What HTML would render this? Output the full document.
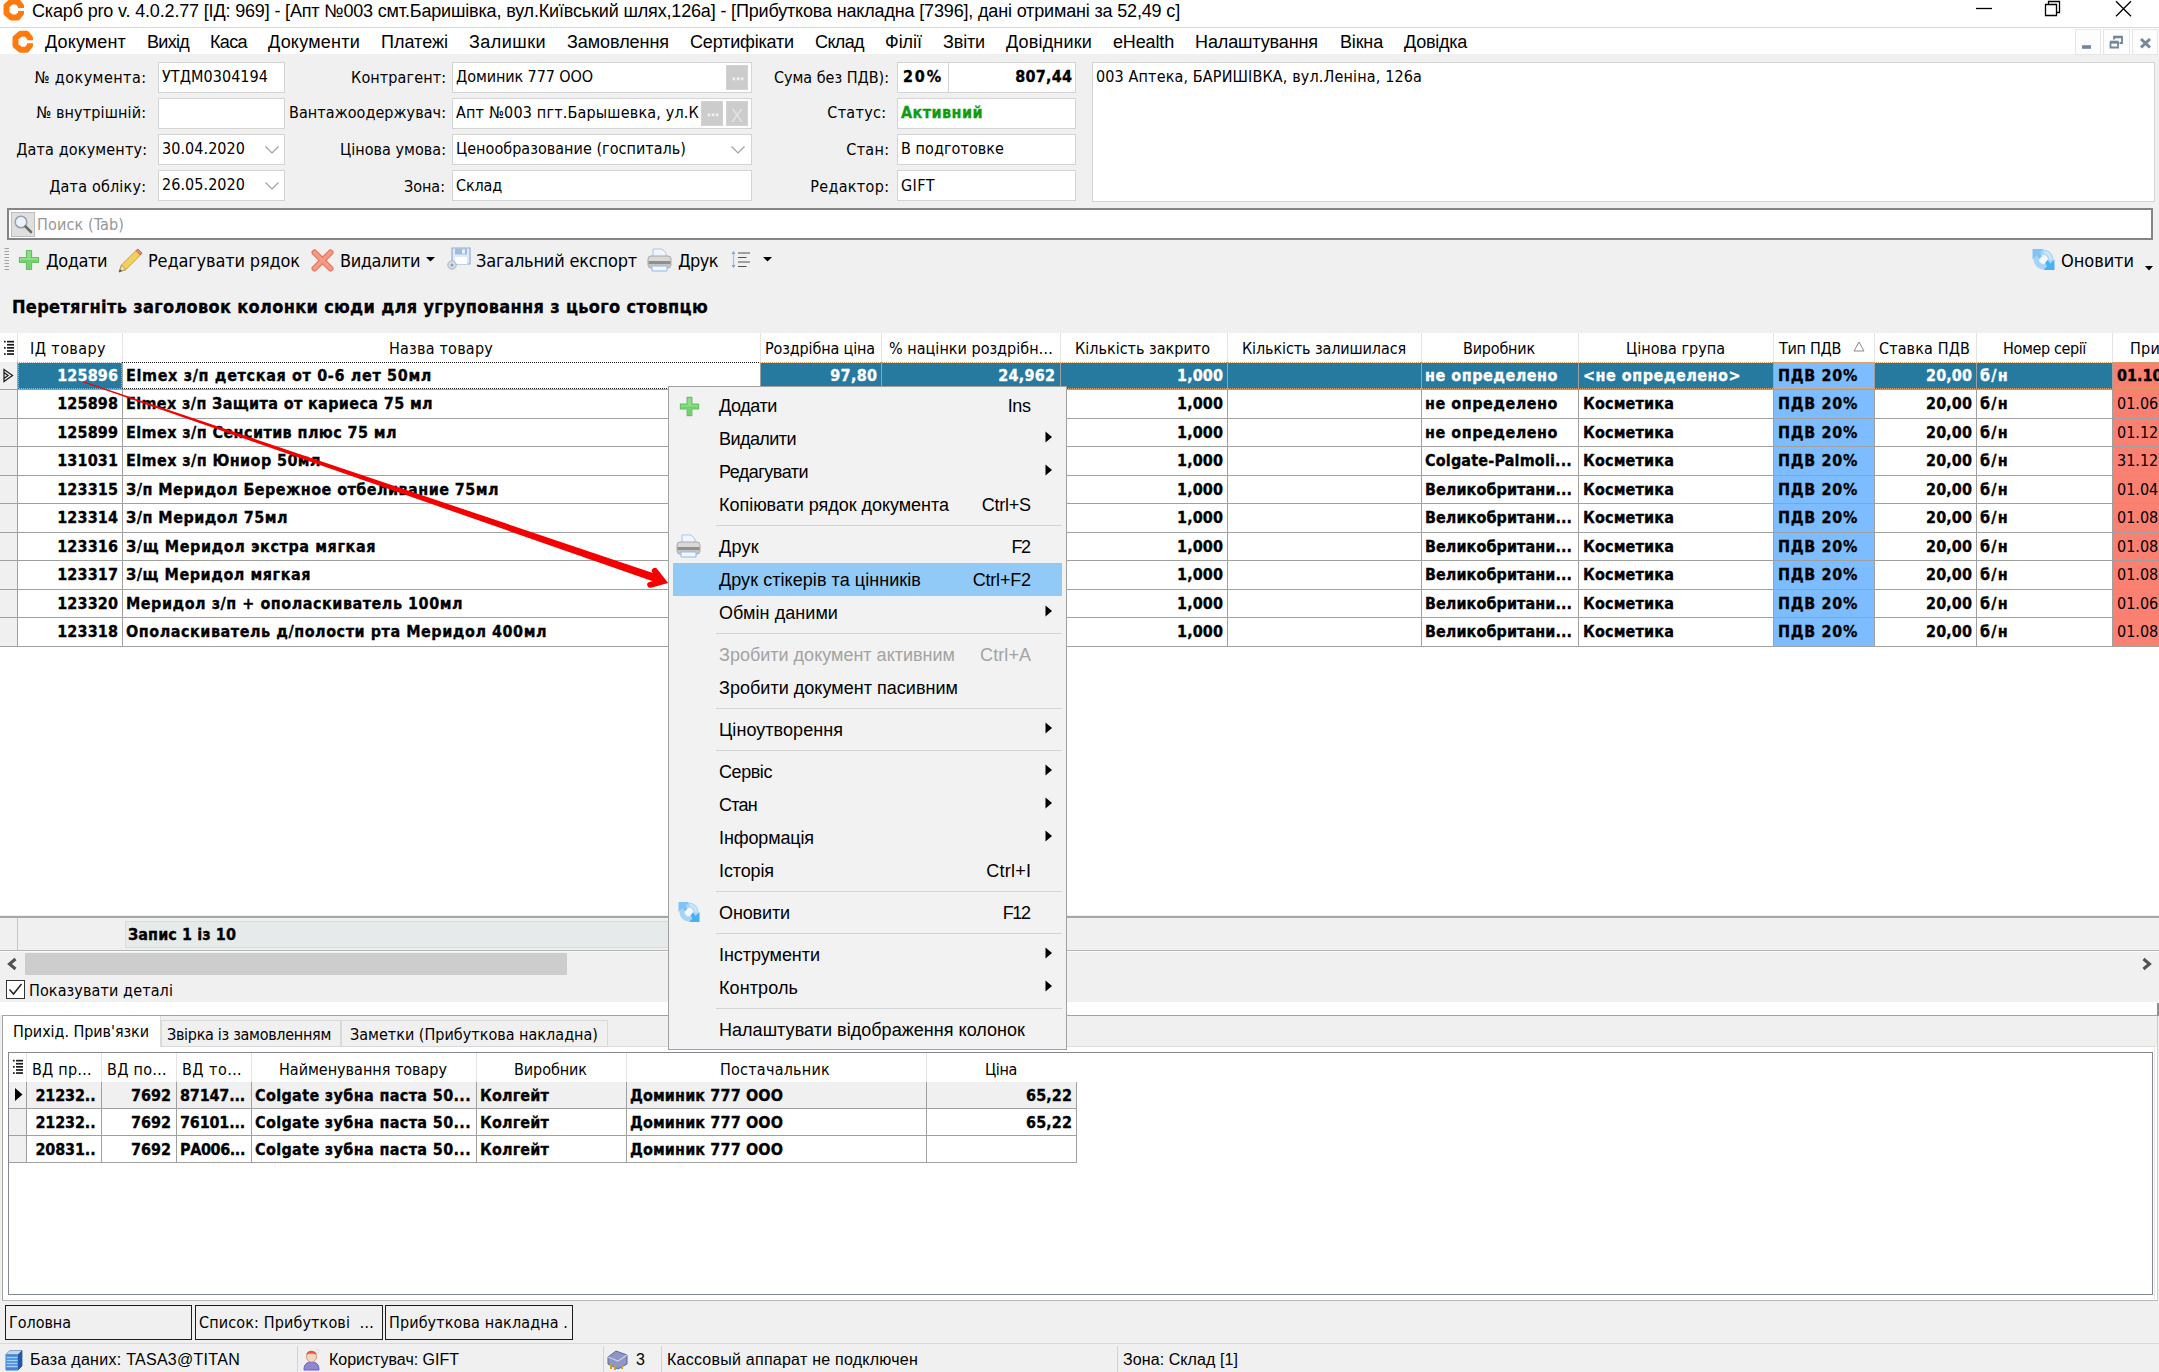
<!DOCTYPE html>
<html lang="uk"><head><meta charset="utf-8"><title>Скарб pro</title>
<style>
html,body{margin:0;padding:0;}
body{width:2159px;height:1372px;position:relative;overflow:hidden;background:#f0f0f0;font-family:"Liberation Sans",sans-serif;}
.b{position:absolute;box-sizing:border-box;}
.t{position:absolute;white-space:pre;line-height:1;color:#000;}
svg{position:absolute;overflow:visible;}
</style></head>
<body>
<div class="b" style="left:0px;top:0px;width:2159px;height:27px;background:#fff;"></div>
<div class="b" style="left:0px;top:27px;width:2159px;height:1px;background:#d9d9d9;"></div>
<svg style="left:3px;top:-2px" width="21" height="23" viewBox="0 0 21 23"><path d="M18 10V7.800L14.500 3.500H8.500L3.500 7.800V15.200L8.500 19.500H14.500L18 15.200V13" fill="none" stroke="#ff7a0d" stroke-width="6" stroke-linejoin="round"/></svg>
<span class="t" style="top:2px;font-size:18px;font-family:'Liberation Sans', sans-serif;letter-spacing:-0.162px;left:32.00px;">Скарб pro v. 4.0.2.77 [ІД: 969] - [Апт №003 смт.Баришівка, вул.Київський шлях,126а] - [Прибуткова накладна [7396], дані отримані за 52,49 с]</span>
<svg style="left:1970px;top:-1px" width="180" height="24" viewBox="0 0 180 24"><g fill="none" stroke="#000" stroke-width="1.3"><path d="M6 9.5H22"/><path d="M75.5 5.5h11v11h-11z M78.5 5.5v-3h11v11h-3"/><path d="M146 2.200l15 15M161 2.200l-15 15"/></g></svg>
<div class="b" style="left:0px;top:28px;width:2159px;height:26px;background:#fff;"></div>
<svg style="left:12px;top:29.5px" width="21" height="23.5" viewBox="0 0 21 23"><path d="M18 10V7.800L14.500 3.500H8.500L3.500 7.800V15.200L8.500 19.500H14.500L18 15.200V13" fill="none" stroke="#ff7a0d" stroke-width="6" stroke-linejoin="round"/></svg>
<span class="t" style="top:33px;font-size:18px;font-family:'Liberation Sans', sans-serif;letter-spacing:0.143px;left:45.00px;">Документ</span>
<span class="t" style="top:33px;font-size:18px;font-family:'Liberation Sans', sans-serif;letter-spacing:-0.713px;left:147.00px;">Вихід</span>
<span class="t" style="top:33px;font-size:18px;font-family:'Liberation Sans', sans-serif;letter-spacing:-0.629px;left:210.00px;">Каса</span>
<span class="t" style="top:33px;font-size:18px;font-family:'Liberation Sans', sans-serif;letter-spacing:0.233px;left:268.00px;">Документи</span>
<span class="t" style="top:33px;font-size:18px;font-family:'Liberation Sans', sans-serif;letter-spacing:0.007px;left:381.00px;">Платежі</span>
<span class="t" style="top:33px;font-size:18px;font-family:'Liberation Sans', sans-serif;letter-spacing:0.455px;left:469.00px;">Залишки</span>
<span class="t" style="top:33px;font-size:18px;font-family:'Liberation Sans', sans-serif;letter-spacing:-0.056px;left:567.00px;">Замовлення</span>
<span class="t" style="top:33px;font-size:18px;font-family:'Liberation Sans', sans-serif;letter-spacing:-0.175px;left:690.00px;">Сертифікати</span>
<span class="t" style="top:33px;font-size:18px;font-family:'Liberation Sans', sans-serif;letter-spacing:-0.619px;left:815.00px;">Склад</span>
<span class="t" style="top:33px;font-size:18px;font-family:'Liberation Sans', sans-serif;letter-spacing:-0.037px;left:885.00px;">Філії</span>
<span class="t" style="top:33px;font-size:18px;font-family:'Liberation Sans', sans-serif;letter-spacing:-0.147px;left:943.00px;">Звіти</span>
<span class="t" style="top:33px;font-size:18px;font-family:'Liberation Sans', sans-serif;letter-spacing:0.177px;left:1006.00px;">Довідники</span>
<span class="t" style="top:33px;font-size:18px;font-family:'Liberation Sans', sans-serif;letter-spacing:-0.150px;left:1113.00px;">eHealth</span>
<span class="t" style="top:33px;font-size:18px;font-family:'Liberation Sans', sans-serif;letter-spacing:-0.118px;left:1195.00px;">Налаштування</span>
<span class="t" style="top:33px;font-size:18px;font-family:'Liberation Sans', sans-serif;letter-spacing:-0.169px;left:1340.00px;">Вікна</span>
<span class="t" style="top:33px;font-size:18px;font-family:'Liberation Sans', sans-serif;letter-spacing:-0.250px;left:1404.00px;">Довідка</span>
<div class="b" style="left:2075px;top:29px;width:26px;height:26px;background:#fdfdfd;border:1px solid #e6e6e6;"></div>
<div class="b" style="left:2103px;top:29px;width:27px;height:26px;background:#fdfdfd;border:1px solid #e6e6e6;"></div>
<div class="b" style="left:2132px;top:29px;width:26px;height:26px;background:#fdfdfd;border:1px solid #e6e6e6;"></div>
<svg style="left:2075px;top:29px" width="84" height="26" viewBox="0 0 84 26"><g fill="none" stroke="#74869b"><path d="M7 18h9" stroke-width="3.600"/><path d="M35.500 13.500h7.500v5h-7.500z" stroke-width="1.800"/><path d="M35 13h8.500" stroke-width="2.600"/><path d="M39 10.500v-2.500h8v6h-2.500" stroke-width="1.800"/><path d="M38.500 8h9" stroke-width="2.600"/><path d="M66 10l9 8.500M75 10l-9 8.500" stroke-width="3"/></g></svg>
<div class="b" style="left:158px;top:62px;width:127px;height:31px;background:#fff;border:1px solid #d4d4d4;"></div>
<div class="b" style="left:452px;top:62px;width:300px;height:31px;background:#fff;border:1px solid #d4d4d4;"></div>
<div class="b" style="left:897px;top:62px;width:179px;height:31px;background:#fff;border:1px solid #d4d4d4;"></div>
<div class="b" style="left:158px;top:98px;width:127px;height:31px;background:#fff;border:1px solid #d4d4d4;"></div>
<div class="b" style="left:452px;top:98px;width:300px;height:31px;background:#fff;border:1px solid #d4d4d4;"></div>
<div class="b" style="left:897px;top:98px;width:179px;height:31px;background:#fff;border:1px solid #d4d4d4;"></div>
<div class="b" style="left:158px;top:134px;width:127px;height:31px;background:#fff;border:1px solid #d4d4d4;"></div>
<div class="b" style="left:452px;top:134px;width:300px;height:31px;background:#fff;border:1px solid #d4d4d4;"></div>
<div class="b" style="left:897px;top:134px;width:179px;height:31px;background:#fff;border:1px solid #d4d4d4;"></div>
<div class="b" style="left:158px;top:170px;width:127px;height:31px;background:#fff;border:1px solid #d4d4d4;"></div>
<div class="b" style="left:452px;top:170px;width:300px;height:31px;background:#fff;border:1px solid #d4d4d4;"></div>
<div class="b" style="left:897px;top:170px;width:179px;height:31px;background:#fff;border:1px solid #d4d4d4;"></div>
<div class="b" style="left:1092px;top:62px;width:1063px;height:140px;background:#fff;border:1px solid #d4d4d4;"></div>
<div class="b" style="left:948px;top:63px;width:1px;height:29px;background:#d4d4d4;"></div>
<span class="t" style="top:70px;font-size:16px;font-family:'DejaVu Sans Condensed', 'DejaVu Sans', 'Liberation Sans', sans-serif;font-stretch:condensed;letter-spacing:0.441px;left:34.44px;">№ документа:</span>
<span class="t" style="top:105px;font-size:16px;font-family:'DejaVu Sans Condensed', 'DejaVu Sans', 'Liberation Sans', sans-serif;font-stretch:condensed;letter-spacing:0.132px;left:36.13px;">№ внутрішній:</span>
<span class="t" style="top:142px;font-size:16px;font-family:'DejaVu Sans Condensed', 'DejaVu Sans', 'Liberation Sans', sans-serif;font-stretch:condensed;letter-spacing:0.153px;left:16.15px;">Дата документу:</span>
<span class="t" style="top:179px;font-size:16px;font-family:'DejaVu Sans Condensed', 'DejaVu Sans', 'Liberation Sans', sans-serif;font-stretch:condensed;letter-spacing:0.184px;left:49.18px;">Дата обліку:</span>
<span class="t" style="top:70px;font-size:16px;font-family:'DejaVu Sans Condensed', 'DejaVu Sans', 'Liberation Sans', sans-serif;font-stretch:condensed;letter-spacing:0.104px;left:351.10px;">Контрагент:</span>
<span class="t" style="top:105px;font-size:16px;font-family:'DejaVu Sans Condensed', 'DejaVu Sans', 'Liberation Sans', sans-serif;font-stretch:condensed;letter-spacing:0.059px;left:289.06px;">Вантажоодержувач:</span>
<span class="t" style="top:142px;font-size:16px;font-family:'DejaVu Sans Condensed', 'DejaVu Sans', 'Liberation Sans', sans-serif;font-stretch:condensed;letter-spacing:0.030px;left:340.03px;">Цінова умова:</span>
<span class="t" style="top:179px;font-size:16px;font-family:'DejaVu Sans Condensed', 'DejaVu Sans', 'Liberation Sans', sans-serif;font-stretch:condensed;letter-spacing:-0.025px;left:403.98px;">Зона:</span>
<span class="t" style="top:70px;font-size:16px;font-family:'DejaVu Sans Condensed', 'DejaVu Sans', 'Liberation Sans', sans-serif;font-stretch:condensed;letter-spacing:-0.015px;left:773.99px;">Сума без ПДВ):</span>
<span class="t" style="top:105px;font-size:16px;font-family:'DejaVu Sans Condensed', 'DejaVu Sans', 'Liberation Sans', sans-serif;font-stretch:condensed;letter-spacing:0.297px;left:827.30px;">Статус:</span>
<span class="t" style="top:142px;font-size:16px;font-family:'DejaVu Sans Condensed', 'DejaVu Sans', 'Liberation Sans', sans-serif;font-stretch:condensed;letter-spacing:0.294px;left:846.29px;">Стан:</span>
<span class="t" style="top:179px;font-size:16px;font-family:'DejaVu Sans Condensed', 'DejaVu Sans', 'Liberation Sans', sans-serif;font-stretch:condensed;letter-spacing:0.312px;left:810.31px;">Редактор:</span>
<span class="t" style="top:69px;font-size:16px;font-family:'DejaVu Sans Condensed', 'DejaVu Sans', 'Liberation Sans', sans-serif;font-stretch:condensed;letter-spacing:0.061px;left:162.00px;">УТДМ0304194</span>
<span class="t" style="top:141px;font-size:16px;font-family:'DejaVu Sans Condensed', 'DejaVu Sans', 'Liberation Sans', sans-serif;font-stretch:condensed;letter-spacing:0.061px;left:162.00px;">30.04.2020</span>
<span class="t" style="top:177px;font-size:16px;font-family:'DejaVu Sans Condensed', 'DejaVu Sans', 'Liberation Sans', sans-serif;font-stretch:condensed;letter-spacing:0.061px;left:162.00px;">26.05.2020</span>
<span class="t" style="top:69px;font-size:16px;font-family:'DejaVu Sans Condensed', 'DejaVu Sans', 'Liberation Sans', sans-serif;font-stretch:condensed;letter-spacing:-0.089px;left:456.00px;">Доминик 777 ООО</span>
<span class="t" style="top:105px;font-size:16px;font-family:'DejaVu Sans Condensed', 'DejaVu Sans', 'Liberation Sans', sans-serif;font-stretch:condensed;letter-spacing:0.177px;left:456.00px;">Апт №003 пгт.Барышевка, ул.К</span>
<span class="t" style="top:141px;font-size:16px;font-family:'DejaVu Sans Condensed', 'DejaVu Sans', 'Liberation Sans', sans-serif;font-stretch:condensed;letter-spacing:0.036px;left:456.00px;">Ценообразование (госпиталь)</span>
<span class="t" style="top:178px;font-size:16px;font-family:'DejaVu Sans Condensed', 'DejaVu Sans', 'Liberation Sans', sans-serif;font-stretch:condensed;letter-spacing:-0.147px;left:456.00px;">Склад</span>
<span class="t" style="top:69px;font-size:16px;font-family:'DejaVu Sans Condensed', 'DejaVu Sans', 'Liberation Sans', sans-serif;font-stretch:condensed;font-weight:bold;-webkit-text-stroke:0.3px;letter-spacing:1.849px;left:903.00px;">20%</span>
<span class="t" style="top:69px;font-size:16px;font-family:'DejaVu Sans Condensed', 'DejaVu Sans', 'Liberation Sans', sans-serif;font-stretch:condensed;font-weight:bold;-webkit-text-stroke:0.3px;letter-spacing:0.242px;left:1015.24px;">807,44</span>
<span class="t" style="top:105px;font-size:16px;font-family:'DejaVu Sans Condensed', 'DejaVu Sans', 'Liberation Sans', sans-serif;font-stretch:condensed;font-weight:bold;-webkit-text-stroke:0.3px;color:#0f9b0f;letter-spacing:0.428px;left:901.00px;">Активний</span>
<span class="t" style="top:141px;font-size:16px;font-family:'DejaVu Sans Condensed', 'DejaVu Sans', 'Liberation Sans', sans-serif;font-stretch:condensed;letter-spacing:0.065px;left:901.00px;">В подготовке</span>
<span class="t" style="top:178px;font-size:16px;font-family:'DejaVu Sans Condensed', 'DejaVu Sans', 'Liberation Sans', sans-serif;font-stretch:condensed;letter-spacing:0.453px;left:901.00px;">GIFT</span>
<span class="t" style="top:69px;font-size:16px;font-family:'DejaVu Sans Condensed', 'DejaVu Sans', 'Liberation Sans', sans-serif;font-stretch:condensed;letter-spacing:0.138px;left:1096.00px;">003 Аптека, БАРИШІВКА, вул.Леніна, 126а</span>
<div class="b" style="left:726px;top:65px;width:22px;height:25px;background:#cccccc;border:1px solid #d2d2d2;"></div>
<div class="b" style="left:701px;top:101px;width:22px;height:25px;background:#cccccc;border:1px solid #d2d2d2;"></div>
<div class="b" style="left:726px;top:101px;width:22px;height:25px;background:#cccccc;border:1px solid #d2d2d2;"></div>
<span class="t" style="top:70px;font-size:12px;font-family:'DejaVu Sans Condensed', 'DejaVu Sans', 'Liberation Sans', sans-serif;font-stretch:condensed;font-weight:bold;-webkit-text-stroke:0.3px;color:#f2f2f2;left:731.84px;">...</span>
<span class="t" style="top:106px;font-size:12px;font-family:'DejaVu Sans Condensed', 'DejaVu Sans', 'Liberation Sans', sans-serif;font-stretch:condensed;font-weight:bold;-webkit-text-stroke:0.3px;color:#f2f2f2;left:706.84px;">...</span>
<span class="t" style="top:107px;font-size:18px;font-family:'Liberation Sans', sans-serif;color:#e2e2e2;left:730.99px;">X</span>
<svg style="left:265px;top:146px" width="14" height="8" viewBox="0 0 14 8"><path d="M0.5 0.5l6.5 6.500l6.500-6.500" fill="none" stroke="#a0a0a0" stroke-width="1.200"/></svg>
<svg style="left:265px;top:182px" width="14" height="8" viewBox="0 0 14 8"><path d="M0.5 0.5l6.5 6.500l6.500-6.500" fill="none" stroke="#a0a0a0" stroke-width="1.200"/></svg>
<svg style="left:731px;top:146px" width="14" height="8" viewBox="0 0 14 8"><path d="M0.5 0.5l6.5 6.500l6.500-6.500" fill="none" stroke="#a0a0a0" stroke-width="1.200"/></svg>
<div class="b" style="left:7px;top:208px;width:2146px;height:32px;background:#fff;border:2px solid #858585;"></div>
<div class="b" style="left:11px;top:212px;width:24px;height:25px;background:#dfdfdf;border:1px solid #bdbdbd;"></div>
<svg style="left:13px;top:214px" width="22" height="22" viewBox="0 0 22 22"><circle cx="8" cy="8" r="5.800" fill="#e9f1fc" stroke="#9aa0a8" stroke-width="1.500"/><path d="M12.500 12.500l5.500 5.500" stroke="#6a6a6a" stroke-width="2.600" stroke-linecap="round"/></svg>
<span class="t" style="top:217px;font-size:16px;font-family:'DejaVu Sans Condensed', 'DejaVu Sans', 'Liberation Sans', sans-serif;font-stretch:condensed;color:#979797;letter-spacing:0.136px;left:37.00px;">Поиск (Tab)</span>
<svg style="left:4px;top:248px" width="6" height="24" viewBox="0 0 6 24"><g fill="#a2a2a2"><rect x="0.500" y="0" width="4.500" height="1"/><rect x="0.500" y="3" width="4.500" height="1"/><rect x="0.500" y="6" width="4.500" height="1"/><rect x="0.500" y="9" width="4.500" height="1"/><rect x="0.500" y="12" width="4.500" height="1"/><rect x="0.500" y="15" width="4.500" height="1"/><rect x="0.500" y="18" width="4.500" height="1"/><rect x="0.500" y="21" width="4.500" height="1"/></g></svg>
<svg style="left:18px;top:249px" width="22" height="22" viewBox="0 0 22 22"><path d="M8.500 1.500h5v7h7v5h-7v7h-5v-7h-7v-5h7z" fill="#8fdc8a" stroke="#62c25d" stroke-width="1.200" stroke-linejoin="round"/><path d="M9.500 13.500h3v6.500h-3zM2.500 11h17v2.200h-17z" fill="#74cf6f"/></svg>
<span class="t" style="top:252px;font-size:18px;font-family:'DejaVu Sans Condensed', 'DejaVu Sans', 'Liberation Sans', sans-serif;font-stretch:condensed;letter-spacing:-0.440px;left:46.00px;">Додати</span>
<svg style="left:117px;top:248px" width="27" height="26" viewBox="0 0 27 26"><path d="M2 24l2.500-7L19 2.500l4.500 4.500L9 21.500z" fill="#f3cf5b" stroke="#c9a23a" stroke-width="1"/><path d="M19 2.500l2-1.500 4 4-1.500 2z" fill="#e58a7a" stroke="#c0604f" stroke-width=".8"/><path d="M2 24l2.500-7 4.500 4.500z" fill="#f0d9b5" stroke="#b58a4a" stroke-width=".8"/><path d="M2 24l1-2.800 1.800 1.800z" fill="#444"/></svg>
<span class="t" style="top:252px;font-size:18px;font-family:'DejaVu Sans Condensed', 'DejaVu Sans', 'Liberation Sans', sans-serif;font-stretch:condensed;letter-spacing:-0.150px;left:148.00px;">Редагувати рядок</span>
<svg style="left:311px;top:249px" width="23" height="23" viewBox="0 0 23 23"><path d="M3.500 3.500l16 16M19.500 3.500l-16 16" fill="none" stroke="#e8735a" stroke-width="6" stroke-linecap="round"/><path d="M3.500 3.500l16 16M19.500 3.500l-16 16" fill="none" stroke="#f59a86" stroke-width="3.600" stroke-linecap="round"/></svg>
<span class="t" style="top:252px;font-size:18px;font-family:'DejaVu Sans Condensed', 'DejaVu Sans', 'Liberation Sans', sans-serif;font-stretch:condensed;letter-spacing:-0.447px;left:340.00px;">Видалити</span>
<svg style="left:425.500px;top:257px" width="9" height="5" viewBox="0 0 9 5"><path d="M0 0h9l-4.500 4.500z" fill="#000"/></svg>
<svg style="left:446px;top:247px" width="26" height="28" viewBox="0 0 26 28"><path d="M6 1h18v16H6z" fill="#dfeaf6" stroke="#8fb0d6" stroke-width="1.200"/><rect x="9" y="1.500" width="12" height="6" fill="#9dbde0"/><rect x="16" y="2.500" width="3" height="4" fill="#eef4fb"/><rect x="9" y="10" width="12" height="7" fill="#fff"/><circle cx="6" cy="18" r="4.200" fill="#d8dde4" stroke="#a9b4c2" stroke-width="1"/><circle cx="6" cy="18" r="1.500" fill="#8da0b8"/></svg>
<span class="t" style="top:252px;font-size:18px;font-family:'DejaVu Sans Condensed', 'DejaVu Sans', 'Liberation Sans', sans-serif;font-stretch:condensed;letter-spacing:-0.193px;left:476.00px;">Загальний експорт</span>
<svg style="left:647px;top:248px" width="25" height="25" viewBox="0 0 25 25"><path d="M6 1h9l4 4v6H6z" fill="#f0f6fd" stroke="#a9c6ea" stroke-width="1"/><rect x="1" y="8" width="23" height="12" rx="3" fill="#d9d9d9" stroke="#a8a8a8" stroke-width="1"/><rect x="1.500" y="13" width="22" height="4" fill="#8f8f8f"/><rect x="1.500" y="16" width="22" height="3" fill="#c4c4c4"/><path d="M5 18h15v5H5z" fill="#f4f9ff" stroke="#8fb8ee" stroke-width="1"/></svg>
<span class="t" style="top:252px;font-size:18px;font-family:'DejaVu Sans Condensed', 'DejaVu Sans', 'Liberation Sans', sans-serif;font-stretch:condensed;letter-spacing:-0.578px;left:678.00px;">Друк</span>
<svg style="left:731px;top:250px" width="20" height="20" viewBox="0 0 20 20"><path d="M2.500 1.500v16" stroke="#9cc2ee" stroke-width="1.200"/><path d="M0.500 4l2-3 2 3zM0.500 15l2 3 2-3z" fill="#6ea8e8"/><g stroke="#505050" stroke-width="1.200"><path d="M7 3h12M7 7.500h8.500M7 12h12M7 16.500h8.500"/></g></svg>
<svg style="left:763px;top:257px" width="9" height="5" viewBox="0 0 9 5"><path d="M0 0h9l-4.500 4.500z" fill="#000"/></svg>
<svg style="left:2032px;top:248px" width="23" height="23" viewBox="0 0 22 22"><circle cx="11" cy="11" r="7" fill="none" stroke="#a6d3f6" stroke-width="5"/><path d="M11 1.500A9.500 9.500 0 0 1 20.500 11" fill="none" stroke="#8ec9f7" stroke-width="0"/><path d="M11.500 4A7 7 0 0 1 18 11.500" fill="none" stroke="#c9e5fa" stroke-width="3"/><path d="M0.500 1h10.500L7.500 4.500 10 8.500 7 10.500 4.500 7 0.500 11z" fill="#7fc4f8"/><path d="M21.500 21H11l3.500-3.500L12 13.500l3-2 2.500 3.500 4-4z" fill="#45b1f6"/><circle cx="11" cy="11" r="3.200" fill="#f4f9fd"/></svg>
<span class="t" style="top:252px;font-size:18px;font-family:'DejaVu Sans Condensed', 'DejaVu Sans', 'Liberation Sans', sans-serif;font-stretch:condensed;letter-spacing:-0.038px;left:2061.00px;">Оновити</span>
<svg style="left:2145px;top:265.500px" width="8" height="5" viewBox="0 0 8 5"><path d="M0 0h8l-4 4.500z" fill="#000"/></svg>
<span class="t" style="top:298px;font-size:18px;font-family:'DejaVu Sans Condensed', 'DejaVu Sans', 'Liberation Sans', sans-serif;font-stretch:condensed;font-weight:bold;-webkit-text-stroke:0.3px;letter-spacing:0.319px;left:12.00px;">Перетягніть заголовок колонки сюди для угруповання з цього стовпцю</span>
<div class="b" style="left:0px;top:333px;width:2159px;height:582px;background:#fff;"></div>
<div class="b" style="left:0px;top:362px;width:17px;height:284px;background:#f0f0f0;"></div>
<div class="b" style="left:1774px;top:362px;width:100px;height:284px;background:#7cbcff;"></div>
<div class="b" style="left:2113px;top:362px;width:60px;height:284px;background:#fa8072;"></div>
<div class="b" style="left:18px;top:363px;width:104px;height:26px;background:#267a9f;"></div>
<div class="b" style="left:761px;top:363px;width:120px;height:26px;background:#267a9f;"></div>
<div class="b" style="left:882px;top:363px;width:178px;height:26px;background:#267a9f;"></div>
<div class="b" style="left:1061px;top:363px;width:166px;height:26px;background:#267a9f;"></div>
<div class="b" style="left:1228px;top:363px;width:193px;height:26px;background:#267a9f;"></div>
<div class="b" style="left:1422px;top:363px;width:156px;height:26px;background:#267a9f;"></div>
<div class="b" style="left:1579px;top:363px;width:194px;height:26px;background:#267a9f;"></div>
<div class="b" style="left:1875px;top:363px;width:101px;height:26px;background:#267a9f;"></div>
<div class="b" style="left:1977px;top:363px;width:135px;height:26px;background:#267a9f;"></div>
<div class="b" style="left:18px;top:363px;width:104px;height:26px;background:#267a9f;"></div>
<div class="b" style="left:17px;top:333px;width:1px;height:29px;background:#e4e4e4;"></div>
<div class="b" style="left:122px;top:333px;width:1px;height:29px;background:#e4e4e4;"></div>
<div class="b" style="left:760px;top:333px;width:1px;height:29px;background:#e4e4e4;"></div>
<div class="b" style="left:881px;top:333px;width:1px;height:29px;background:#e4e4e4;"></div>
<div class="b" style="left:1060px;top:333px;width:1px;height:29px;background:#e4e4e4;"></div>
<div class="b" style="left:1227px;top:333px;width:1px;height:29px;background:#e4e4e4;"></div>
<div class="b" style="left:1421px;top:333px;width:1px;height:29px;background:#e4e4e4;"></div>
<div class="b" style="left:1578px;top:333px;width:1px;height:29px;background:#e4e4e4;"></div>
<div class="b" style="left:1773px;top:333px;width:1px;height:29px;background:#e4e4e4;"></div>
<div class="b" style="left:1874px;top:333px;width:1px;height:29px;background:#e4e4e4;"></div>
<div class="b" style="left:1976px;top:333px;width:1px;height:29px;background:#e4e4e4;"></div>
<div class="b" style="left:2112px;top:333px;width:1px;height:29px;background:#e4e4e4;"></div>
<div class="b" style="left:0px;top:389px;width:2159px;height:1px;background:#a0a0a0;"></div>
<div class="b" style="left:0px;top:418px;width:2159px;height:1px;background:#a0a0a0;"></div>
<div class="b" style="left:0px;top:446px;width:2159px;height:1px;background:#a0a0a0;"></div>
<div class="b" style="left:0px;top:475px;width:2159px;height:1px;background:#a0a0a0;"></div>
<div class="b" style="left:0px;top:503px;width:2159px;height:1px;background:#a0a0a0;"></div>
<div class="b" style="left:0px;top:532px;width:2159px;height:1px;background:#a0a0a0;"></div>
<div class="b" style="left:0px;top:560px;width:2159px;height:1px;background:#a0a0a0;"></div>
<div class="b" style="left:0px;top:589px;width:2159px;height:1px;background:#a0a0a0;"></div>
<div class="b" style="left:0px;top:617px;width:2159px;height:1px;background:#a0a0a0;"></div>
<div class="b" style="left:0px;top:646px;width:2159px;height:1px;background:#a0a0a0;"></div>
<div class="b" style="left:17px;top:362px;width:1px;height:285px;background:#a0a0a0;"></div>
<div class="b" style="left:122px;top:362px;width:1px;height:285px;background:#a0a0a0;"></div>
<div class="b" style="left:760px;top:362px;width:1px;height:285px;background:#a0a0a0;"></div>
<div class="b" style="left:881px;top:362px;width:1px;height:285px;background:#a0a0a0;"></div>
<div class="b" style="left:1060px;top:362px;width:1px;height:285px;background:#a0a0a0;"></div>
<div class="b" style="left:1227px;top:362px;width:1px;height:285px;background:#a0a0a0;"></div>
<div class="b" style="left:1421px;top:362px;width:1px;height:285px;background:#a0a0a0;"></div>
<div class="b" style="left:1578px;top:362px;width:1px;height:285px;background:#a0a0a0;"></div>
<div class="b" style="left:1773px;top:362px;width:1px;height:285px;background:#a0a0a0;"></div>
<div class="b" style="left:1874px;top:362px;width:1px;height:285px;background:#a0a0a0;"></div>
<div class="b" style="left:1976px;top:362px;width:1px;height:285px;background:#a0a0a0;"></div>
<div class="b" style="left:2112px;top:362px;width:1px;height:285px;background:#a0a0a0;"></div>
<div class="b" style="left:122px;top:362px;width:638px;height:1px;background:repeating-linear-gradient(90deg,#222 0 1px,transparent 1px 2px);"></div>
<div class="b" style="left:122px;top:388px;width:638px;height:1px;background:repeating-linear-gradient(90deg,#222 0 1px,transparent 1px 2px);"></div>
<div class="b" style="left:17px;top:362px;width:105px;height:1px;background:repeating-linear-gradient(90deg,#d9a066 0 1px,transparent 1px 2px);"></div>
<div class="b" style="left:17px;top:388px;width:105px;height:1px;background:repeating-linear-gradient(90deg,#d9a066 0 1px,transparent 1px 2px);"></div>
<div class="b" style="left:760px;top:388px;width:1399px;height:1px;background:repeating-linear-gradient(90deg,#d9a066 0 1px,transparent 1px 2px);"></div>
<div class="b" style="left:760px;top:362px;width:1399px;height:1px;background:repeating-linear-gradient(90deg,#d9a066 0 1px,transparent 1px 2px);"></div>
<div class="b" style="left:18px;top:363px;width:1px;height:25px;background:repeating-linear-gradient(180deg,#d9a066 0 1px,transparent 1px 2px);"></div>
<div class="b" style="left:121px;top:363px;width:1px;height:25px;background:repeating-linear-gradient(180deg,#d9a066 0 1px,transparent 1px 2px);"></div>
<svg style="left:3px;top:368px" width="11" height="15" viewBox="0 0 11 15"><path d="M1 1.500l8.500 6-8.500 6z M1 4.500l4 3-4 3" fill="none" stroke="#222" stroke-width="1.3"/></svg>
<svg style="left:3px;top:340px" width="12" height="16" viewBox="0 0 12 16"><g fill="#1a1a1a"><rect x="4" y="0.8" width="7" height="1.700"/><rect x="4" y="3.9" width="7" height="1.700"/><rect x="4" y="7" width="7" height="1.700"/><rect x="4" y="10.1" width="7" height="1.700"/><rect x="4" y="13.2" width="7" height="1.700"/><rect x="1" y="0.8" width="1.700" height="1.700"/><rect x="1" y="7" width="1.700" height="1.700"/><rect x="1" y="13.2" width="1.700" height="1.700"/></g></svg>
<span class="t" style="top:341px;font-size:16px;font-family:'DejaVu Sans Condensed', 'DejaVu Sans', 'Liberation Sans', sans-serif;font-stretch:condensed;letter-spacing:0.420px;left:30.00px;">ІД товару</span>
<span class="t" style="top:341px;font-size:16px;font-family:'DejaVu Sans Condensed', 'DejaVu Sans', 'Liberation Sans', sans-serif;font-stretch:condensed;letter-spacing:0.223px;left:389.00px;">Назва товару</span>
<span class="t" style="top:341px;font-size:16px;font-family:'DejaVu Sans Condensed', 'DejaVu Sans', 'Liberation Sans', sans-serif;font-stretch:condensed;letter-spacing:-0.140px;left:765.00px;">Роздрібна ціна</span>
<span class="t" style="top:341px;font-size:16px;font-family:'DejaVu Sans Condensed', 'DejaVu Sans', 'Liberation Sans', sans-serif;font-stretch:condensed;letter-spacing:0.016px;left:889.00px;">% націнки роздрібн…</span>
<span class="t" style="top:341px;font-size:16px;font-family:'DejaVu Sans Condensed', 'DejaVu Sans', 'Liberation Sans', sans-serif;font-stretch:condensed;letter-spacing:0.011px;left:1075.00px;">Кількість закрито</span>
<span class="t" style="top:341px;font-size:16px;font-family:'DejaVu Sans Condensed', 'DejaVu Sans', 'Liberation Sans', sans-serif;font-stretch:condensed;letter-spacing:-0.105px;left:1242.00px;">Кількість залишилася</span>
<span class="t" style="top:341px;font-size:16px;font-family:'DejaVu Sans Condensed', 'DejaVu Sans', 'Liberation Sans', sans-serif;font-stretch:condensed;letter-spacing:-0.189px;left:1463.00px;">Виробник</span>
<span class="t" style="top:341px;font-size:16px;font-family:'DejaVu Sans Condensed', 'DejaVu Sans', 'Liberation Sans', sans-serif;font-stretch:condensed;letter-spacing:0.022px;left:1626.00px;">Цінова група</span>
<span class="t" style="top:341px;font-size:16px;font-family:'DejaVu Sans Condensed', 'DejaVu Sans', 'Liberation Sans', sans-serif;font-stretch:condensed;letter-spacing:-0.297px;left:1779.00px;">Тип ПДВ</span>
<span class="t" style="top:341px;font-size:16px;font-family:'DejaVu Sans Condensed', 'DejaVu Sans', 'Liberation Sans', sans-serif;font-stretch:condensed;letter-spacing:0.122px;left:1879.00px;">Ставка ПДВ</span>
<span class="t" style="top:341px;font-size:16px;font-family:'DejaVu Sans Condensed', 'DejaVu Sans', 'Liberation Sans', sans-serif;font-stretch:condensed;letter-spacing:-0.362px;left:2003.00px;">Номер серії</span>
<span class="t" style="top:341px;font-size:16px;font-family:'DejaVu Sans Condensed', 'DejaVu Sans', 'Liberation Sans', sans-serif;font-stretch:condensed;letter-spacing:0.224px;left:2130.00px;">При</span>
<svg style="left:1853px;top:341px" width="12" height="11" viewBox="0 0 12 11"><path d="M6 1l5 9h-10z" fill="none" stroke="#8a8a8a" stroke-width="1"/></svg>
<span class="t" style="top:368px;font-size:16px;font-family:'DejaVu Sans Condensed', 'DejaVu Sans', 'Liberation Sans', sans-serif;font-stretch:condensed;font-weight:bold;-webkit-text-stroke:0.3px;color:#fff;letter-spacing:0.151px;left:57.15px;">125896</span>
<span class="t" style="top:368px;font-size:16px;font-family:'DejaVu Sans Condensed', 'DejaVu Sans', 'Liberation Sans', sans-serif;font-stretch:condensed;font-weight:bold;-webkit-text-stroke:0.3px;letter-spacing:0.646px;left:126.00px;">Elmex з/п детская от 0-6 лет 50мл</span>
<span class="t" style="top:368px;font-size:16px;font-family:'DejaVu Sans Condensed', 'DejaVu Sans', 'Liberation Sans', sans-serif;font-stretch:condensed;font-weight:bold;-webkit-text-stroke:0.3px;color:#fff;letter-spacing:0.294px;left:830.29px;">97,80</span>
<span class="t" style="top:368px;font-size:16px;font-family:'DejaVu Sans Condensed', 'DejaVu Sans', 'Liberation Sans', sans-serif;font-stretch:condensed;font-weight:bold;-webkit-text-stroke:0.3px;color:#fff;letter-spacing:0.242px;left:998.24px;">24,962</span>
<span class="t" style="top:368px;font-size:16px;font-family:'DejaVu Sans Condensed', 'DejaVu Sans', 'Liberation Sans', sans-serif;font-stretch:condensed;font-weight:bold;-webkit-text-stroke:0.3px;color:#fff;letter-spacing:0.094px;left:1177.09px;">1,000</span>
<span class="t" style="top:368px;font-size:16px;font-family:'DejaVu Sans Condensed', 'DejaVu Sans', 'Liberation Sans', sans-serif;font-stretch:condensed;font-weight:bold;-webkit-text-stroke:0.3px;color:#fff;letter-spacing:0.525px;left:1425.00px;">не определено</span>
<span class="t" style="top:368px;font-size:16px;font-family:'DejaVu Sans Condensed', 'DejaVu Sans', 'Liberation Sans', sans-serif;font-stretch:condensed;font-weight:bold;-webkit-text-stroke:0.3px;color:#fff;letter-spacing:0.514px;left:1583.00px;">&lt;не определено&gt;</span>
<span class="t" style="top:368px;font-size:16px;font-family:'DejaVu Sans Condensed', 'DejaVu Sans', 'Liberation Sans', sans-serif;font-stretch:condensed;font-weight:bold;-webkit-text-stroke:0.3px;letter-spacing:0.672px;left:1778.00px;">ПДВ 20%</span>
<span class="t" style="top:368px;font-size:16px;font-family:'DejaVu Sans Condensed', 'DejaVu Sans', 'Liberation Sans', sans-serif;font-stretch:condensed;font-weight:bold;-webkit-text-stroke:0.3px;color:#fff;letter-spacing:0.094px;left:1926.09px;">20,00</span>
<span class="t" style="top:368px;font-size:16px;font-family:'DejaVu Sans Condensed', 'DejaVu Sans', 'Liberation Sans', sans-serif;font-stretch:condensed;font-weight:bold;-webkit-text-stroke:0.3px;color:#fff;letter-spacing:1.245px;left:1980.00px;">б/н</span>
<span class="t" style="top:368px;font-size:16px;font-family:'DejaVu Sans Condensed', 'DejaVu Sans', 'Liberation Sans', sans-serif;font-stretch:condensed;font-weight:bold;-webkit-text-stroke:0.3px;left:2117.00px;">01.10.2020</span>
<span class="t" style="top:396px;font-size:16px;font-family:'DejaVu Sans Condensed', 'DejaVu Sans', 'Liberation Sans', sans-serif;font-stretch:condensed;font-weight:bold;-webkit-text-stroke:0.3px;letter-spacing:0.151px;left:57.15px;">125898</span>
<span class="t" style="top:396px;font-size:16px;font-family:'DejaVu Sans Condensed', 'DejaVu Sans', 'Liberation Sans', sans-serif;font-stretch:condensed;font-weight:bold;-webkit-text-stroke:0.3px;letter-spacing:0.367px;left:126.00px;">Elmex з/п Защита от кариеса 75 мл</span>
<span class="t" style="top:396px;font-size:16px;font-family:'DejaVu Sans Condensed', 'DejaVu Sans', 'Liberation Sans', sans-serif;font-stretch:condensed;font-weight:bold;-webkit-text-stroke:0.3px;letter-spacing:0.094px;left:1177.09px;">1,000</span>
<span class="t" style="top:396px;font-size:16px;font-family:'DejaVu Sans Condensed', 'DejaVu Sans', 'Liberation Sans', sans-serif;font-stretch:condensed;font-weight:bold;-webkit-text-stroke:0.3px;letter-spacing:0.525px;left:1425.00px;">не определено</span>
<span class="t" style="top:396px;font-size:16px;font-family:'DejaVu Sans Condensed', 'DejaVu Sans', 'Liberation Sans', sans-serif;font-stretch:condensed;font-weight:bold;-webkit-text-stroke:0.3px;letter-spacing:0.151px;left:1583.00px;">Косметика</span>
<span class="t" style="top:396px;font-size:16px;font-family:'DejaVu Sans Condensed', 'DejaVu Sans', 'Liberation Sans', sans-serif;font-stretch:condensed;font-weight:bold;-webkit-text-stroke:0.3px;letter-spacing:0.672px;left:1778.00px;">ПДВ 20%</span>
<span class="t" style="top:396px;font-size:16px;font-family:'DejaVu Sans Condensed', 'DejaVu Sans', 'Liberation Sans', sans-serif;font-stretch:condensed;font-weight:bold;-webkit-text-stroke:0.3px;letter-spacing:0.094px;left:1926.09px;">20,00</span>
<span class="t" style="top:396px;font-size:16px;font-family:'DejaVu Sans Condensed', 'DejaVu Sans', 'Liberation Sans', sans-serif;font-stretch:condensed;font-weight:bold;-webkit-text-stroke:0.3px;letter-spacing:1.245px;left:1980.00px;">б/н</span>
<span class="t" style="top:396px;font-size:16px;font-family:'DejaVu Sans Condensed', 'DejaVu Sans', 'Liberation Sans', sans-serif;font-stretch:condensed;left:2117.00px;">01.06.2020</span>
<span class="t" style="top:425px;font-size:16px;font-family:'DejaVu Sans Condensed', 'DejaVu Sans', 'Liberation Sans', sans-serif;font-stretch:condensed;font-weight:bold;-webkit-text-stroke:0.3px;letter-spacing:0.151px;left:57.15px;">125899</span>
<span class="t" style="top:425px;font-size:16px;font-family:'DejaVu Sans Condensed', 'DejaVu Sans', 'Liberation Sans', sans-serif;font-stretch:condensed;font-weight:bold;-webkit-text-stroke:0.3px;letter-spacing:0.406px;left:126.00px;">Elmex з/п Сенситив плюс 75 мл</span>
<span class="t" style="top:425px;font-size:16px;font-family:'DejaVu Sans Condensed', 'DejaVu Sans', 'Liberation Sans', sans-serif;font-stretch:condensed;font-weight:bold;-webkit-text-stroke:0.3px;letter-spacing:0.094px;left:1177.09px;">1,000</span>
<span class="t" style="top:425px;font-size:16px;font-family:'DejaVu Sans Condensed', 'DejaVu Sans', 'Liberation Sans', sans-serif;font-stretch:condensed;font-weight:bold;-webkit-text-stroke:0.3px;letter-spacing:0.525px;left:1425.00px;">не определено</span>
<span class="t" style="top:425px;font-size:16px;font-family:'DejaVu Sans Condensed', 'DejaVu Sans', 'Liberation Sans', sans-serif;font-stretch:condensed;font-weight:bold;-webkit-text-stroke:0.3px;letter-spacing:0.151px;left:1583.00px;">Косметика</span>
<span class="t" style="top:425px;font-size:16px;font-family:'DejaVu Sans Condensed', 'DejaVu Sans', 'Liberation Sans', sans-serif;font-stretch:condensed;font-weight:bold;-webkit-text-stroke:0.3px;letter-spacing:0.672px;left:1778.00px;">ПДВ 20%</span>
<span class="t" style="top:425px;font-size:16px;font-family:'DejaVu Sans Condensed', 'DejaVu Sans', 'Liberation Sans', sans-serif;font-stretch:condensed;font-weight:bold;-webkit-text-stroke:0.3px;letter-spacing:0.094px;left:1926.09px;">20,00</span>
<span class="t" style="top:425px;font-size:16px;font-family:'DejaVu Sans Condensed', 'DejaVu Sans', 'Liberation Sans', sans-serif;font-stretch:condensed;font-weight:bold;-webkit-text-stroke:0.3px;letter-spacing:1.245px;left:1980.00px;">б/н</span>
<span class="t" style="top:425px;font-size:16px;font-family:'DejaVu Sans Condensed', 'DejaVu Sans', 'Liberation Sans', sans-serif;font-stretch:condensed;left:2117.00px;">01.12.2020</span>
<span class="t" style="top:453px;font-size:16px;font-family:'DejaVu Sans Condensed', 'DejaVu Sans', 'Liberation Sans', sans-serif;font-stretch:condensed;font-weight:bold;-webkit-text-stroke:0.3px;letter-spacing:0.151px;left:57.15px;">131031</span>
<span class="t" style="top:453px;font-size:16px;font-family:'DejaVu Sans Condensed', 'DejaVu Sans', 'Liberation Sans', sans-serif;font-stretch:condensed;font-weight:bold;-webkit-text-stroke:0.3px;letter-spacing:0.406px;left:126.00px;">Elmex з/п Юниор 50мл</span>
<span class="t" style="top:453px;font-size:16px;font-family:'DejaVu Sans Condensed', 'DejaVu Sans', 'Liberation Sans', sans-serif;font-stretch:condensed;font-weight:bold;-webkit-text-stroke:0.3px;letter-spacing:0.094px;left:1177.09px;">1,000</span>
<span class="t" style="top:453px;font-size:16px;font-family:'DejaVu Sans Condensed', 'DejaVu Sans', 'Liberation Sans', sans-serif;font-stretch:condensed;font-weight:bold;-webkit-text-stroke:0.3px;letter-spacing:0.170px;left:1425.00px;">Colgate-Palmoli...</span>
<span class="t" style="top:453px;font-size:16px;font-family:'DejaVu Sans Condensed', 'DejaVu Sans', 'Liberation Sans', sans-serif;font-stretch:condensed;font-weight:bold;-webkit-text-stroke:0.3px;letter-spacing:0.151px;left:1583.00px;">Косметика</span>
<span class="t" style="top:453px;font-size:16px;font-family:'DejaVu Sans Condensed', 'DejaVu Sans', 'Liberation Sans', sans-serif;font-stretch:condensed;font-weight:bold;-webkit-text-stroke:0.3px;letter-spacing:0.672px;left:1778.00px;">ПДВ 20%</span>
<span class="t" style="top:453px;font-size:16px;font-family:'DejaVu Sans Condensed', 'DejaVu Sans', 'Liberation Sans', sans-serif;font-stretch:condensed;font-weight:bold;-webkit-text-stroke:0.3px;letter-spacing:0.094px;left:1926.09px;">20,00</span>
<span class="t" style="top:453px;font-size:16px;font-family:'DejaVu Sans Condensed', 'DejaVu Sans', 'Liberation Sans', sans-serif;font-stretch:condensed;font-weight:bold;-webkit-text-stroke:0.3px;letter-spacing:1.245px;left:1980.00px;">б/н</span>
<span class="t" style="top:453px;font-size:16px;font-family:'DejaVu Sans Condensed', 'DejaVu Sans', 'Liberation Sans', sans-serif;font-stretch:condensed;left:2117.00px;">31.12.2020</span>
<span class="t" style="top:482px;font-size:16px;font-family:'DejaVu Sans Condensed', 'DejaVu Sans', 'Liberation Sans', sans-serif;font-stretch:condensed;font-weight:bold;-webkit-text-stroke:0.3px;letter-spacing:0.151px;left:57.15px;">123315</span>
<span class="t" style="top:482px;font-size:16px;font-family:'DejaVu Sans Condensed', 'DejaVu Sans', 'Liberation Sans', sans-serif;font-stretch:condensed;font-weight:bold;-webkit-text-stroke:0.3px;letter-spacing:0.449px;left:126.00px;">З/п Меридол Бережное отбеливание 75мл</span>
<span class="t" style="top:482px;font-size:16px;font-family:'DejaVu Sans Condensed', 'DejaVu Sans', 'Liberation Sans', sans-serif;font-stretch:condensed;font-weight:bold;-webkit-text-stroke:0.3px;letter-spacing:0.094px;left:1177.09px;">1,000</span>
<span class="t" style="top:482px;font-size:16px;font-family:'DejaVu Sans Condensed', 'DejaVu Sans', 'Liberation Sans', sans-serif;font-stretch:condensed;font-weight:bold;-webkit-text-stroke:0.3px;letter-spacing:0.064px;left:1425.00px;">Великобритани...</span>
<span class="t" style="top:482px;font-size:16px;font-family:'DejaVu Sans Condensed', 'DejaVu Sans', 'Liberation Sans', sans-serif;font-stretch:condensed;font-weight:bold;-webkit-text-stroke:0.3px;letter-spacing:0.151px;left:1583.00px;">Косметика</span>
<span class="t" style="top:482px;font-size:16px;font-family:'DejaVu Sans Condensed', 'DejaVu Sans', 'Liberation Sans', sans-serif;font-stretch:condensed;font-weight:bold;-webkit-text-stroke:0.3px;letter-spacing:0.672px;left:1778.00px;">ПДВ 20%</span>
<span class="t" style="top:482px;font-size:16px;font-family:'DejaVu Sans Condensed', 'DejaVu Sans', 'Liberation Sans', sans-serif;font-stretch:condensed;font-weight:bold;-webkit-text-stroke:0.3px;letter-spacing:0.094px;left:1926.09px;">20,00</span>
<span class="t" style="top:482px;font-size:16px;font-family:'DejaVu Sans Condensed', 'DejaVu Sans', 'Liberation Sans', sans-serif;font-stretch:condensed;font-weight:bold;-webkit-text-stroke:0.3px;letter-spacing:1.245px;left:1980.00px;">б/н</span>
<span class="t" style="top:482px;font-size:16px;font-family:'DejaVu Sans Condensed', 'DejaVu Sans', 'Liberation Sans', sans-serif;font-stretch:condensed;left:2117.00px;">01.04.2020</span>
<span class="t" style="top:510px;font-size:16px;font-family:'DejaVu Sans Condensed', 'DejaVu Sans', 'Liberation Sans', sans-serif;font-stretch:condensed;font-weight:bold;-webkit-text-stroke:0.3px;letter-spacing:0.151px;left:57.15px;">123314</span>
<span class="t" style="top:510px;font-size:16px;font-family:'DejaVu Sans Condensed', 'DejaVu Sans', 'Liberation Sans', sans-serif;font-stretch:condensed;font-weight:bold;-webkit-text-stroke:0.3px;letter-spacing:0.479px;left:126.00px;">З/п Меридол 75мл</span>
<span class="t" style="top:510px;font-size:16px;font-family:'DejaVu Sans Condensed', 'DejaVu Sans', 'Liberation Sans', sans-serif;font-stretch:condensed;font-weight:bold;-webkit-text-stroke:0.3px;letter-spacing:0.094px;left:1177.09px;">1,000</span>
<span class="t" style="top:510px;font-size:16px;font-family:'DejaVu Sans Condensed', 'DejaVu Sans', 'Liberation Sans', sans-serif;font-stretch:condensed;font-weight:bold;-webkit-text-stroke:0.3px;letter-spacing:0.064px;left:1425.00px;">Великобритани...</span>
<span class="t" style="top:510px;font-size:16px;font-family:'DejaVu Sans Condensed', 'DejaVu Sans', 'Liberation Sans', sans-serif;font-stretch:condensed;font-weight:bold;-webkit-text-stroke:0.3px;letter-spacing:0.151px;left:1583.00px;">Косметика</span>
<span class="t" style="top:510px;font-size:16px;font-family:'DejaVu Sans Condensed', 'DejaVu Sans', 'Liberation Sans', sans-serif;font-stretch:condensed;font-weight:bold;-webkit-text-stroke:0.3px;letter-spacing:0.672px;left:1778.00px;">ПДВ 20%</span>
<span class="t" style="top:510px;font-size:16px;font-family:'DejaVu Sans Condensed', 'DejaVu Sans', 'Liberation Sans', sans-serif;font-stretch:condensed;font-weight:bold;-webkit-text-stroke:0.3px;letter-spacing:0.094px;left:1926.09px;">20,00</span>
<span class="t" style="top:510px;font-size:16px;font-family:'DejaVu Sans Condensed', 'DejaVu Sans', 'Liberation Sans', sans-serif;font-stretch:condensed;font-weight:bold;-webkit-text-stroke:0.3px;letter-spacing:1.245px;left:1980.00px;">б/н</span>
<span class="t" style="top:510px;font-size:16px;font-family:'DejaVu Sans Condensed', 'DejaVu Sans', 'Liberation Sans', sans-serif;font-stretch:condensed;left:2117.00px;">01.08.2020</span>
<span class="t" style="top:539px;font-size:16px;font-family:'DejaVu Sans Condensed', 'DejaVu Sans', 'Liberation Sans', sans-serif;font-stretch:condensed;font-weight:bold;-webkit-text-stroke:0.3px;letter-spacing:0.151px;left:57.15px;">123316</span>
<span class="t" style="top:539px;font-size:16px;font-family:'DejaVu Sans Condensed', 'DejaVu Sans', 'Liberation Sans', sans-serif;font-stretch:condensed;font-weight:bold;-webkit-text-stroke:0.3px;letter-spacing:0.583px;left:126.00px;">З/щ Меридол экстра мягкая</span>
<span class="t" style="top:539px;font-size:16px;font-family:'DejaVu Sans Condensed', 'DejaVu Sans', 'Liberation Sans', sans-serif;font-stretch:condensed;font-weight:bold;-webkit-text-stroke:0.3px;letter-spacing:0.094px;left:1177.09px;">1,000</span>
<span class="t" style="top:539px;font-size:16px;font-family:'DejaVu Sans Condensed', 'DejaVu Sans', 'Liberation Sans', sans-serif;font-stretch:condensed;font-weight:bold;-webkit-text-stroke:0.3px;letter-spacing:0.064px;left:1425.00px;">Великобритани...</span>
<span class="t" style="top:539px;font-size:16px;font-family:'DejaVu Sans Condensed', 'DejaVu Sans', 'Liberation Sans', sans-serif;font-stretch:condensed;font-weight:bold;-webkit-text-stroke:0.3px;letter-spacing:0.151px;left:1583.00px;">Косметика</span>
<span class="t" style="top:539px;font-size:16px;font-family:'DejaVu Sans Condensed', 'DejaVu Sans', 'Liberation Sans', sans-serif;font-stretch:condensed;font-weight:bold;-webkit-text-stroke:0.3px;letter-spacing:0.672px;left:1778.00px;">ПДВ 20%</span>
<span class="t" style="top:539px;font-size:16px;font-family:'DejaVu Sans Condensed', 'DejaVu Sans', 'Liberation Sans', sans-serif;font-stretch:condensed;font-weight:bold;-webkit-text-stroke:0.3px;letter-spacing:0.094px;left:1926.09px;">20,00</span>
<span class="t" style="top:539px;font-size:16px;font-family:'DejaVu Sans Condensed', 'DejaVu Sans', 'Liberation Sans', sans-serif;font-stretch:condensed;font-weight:bold;-webkit-text-stroke:0.3px;letter-spacing:1.245px;left:1980.00px;">б/н</span>
<span class="t" style="top:539px;font-size:16px;font-family:'DejaVu Sans Condensed', 'DejaVu Sans', 'Liberation Sans', sans-serif;font-stretch:condensed;left:2117.00px;">01.08.2020</span>
<span class="t" style="top:567px;font-size:16px;font-family:'DejaVu Sans Condensed', 'DejaVu Sans', 'Liberation Sans', sans-serif;font-stretch:condensed;font-weight:bold;-webkit-text-stroke:0.3px;letter-spacing:0.151px;left:57.15px;">123317</span>
<span class="t" style="top:567px;font-size:16px;font-family:'DejaVu Sans Condensed', 'DejaVu Sans', 'Liberation Sans', sans-serif;font-stretch:condensed;font-weight:bold;-webkit-text-stroke:0.3px;letter-spacing:0.543px;left:126.00px;">З/щ Меридол мягкая</span>
<span class="t" style="top:567px;font-size:16px;font-family:'DejaVu Sans Condensed', 'DejaVu Sans', 'Liberation Sans', sans-serif;font-stretch:condensed;font-weight:bold;-webkit-text-stroke:0.3px;letter-spacing:0.094px;left:1177.09px;">1,000</span>
<span class="t" style="top:567px;font-size:16px;font-family:'DejaVu Sans Condensed', 'DejaVu Sans', 'Liberation Sans', sans-serif;font-stretch:condensed;font-weight:bold;-webkit-text-stroke:0.3px;letter-spacing:0.064px;left:1425.00px;">Великобритани...</span>
<span class="t" style="top:567px;font-size:16px;font-family:'DejaVu Sans Condensed', 'DejaVu Sans', 'Liberation Sans', sans-serif;font-stretch:condensed;font-weight:bold;-webkit-text-stroke:0.3px;letter-spacing:0.151px;left:1583.00px;">Косметика</span>
<span class="t" style="top:567px;font-size:16px;font-family:'DejaVu Sans Condensed', 'DejaVu Sans', 'Liberation Sans', sans-serif;font-stretch:condensed;font-weight:bold;-webkit-text-stroke:0.3px;letter-spacing:0.672px;left:1778.00px;">ПДВ 20%</span>
<span class="t" style="top:567px;font-size:16px;font-family:'DejaVu Sans Condensed', 'DejaVu Sans', 'Liberation Sans', sans-serif;font-stretch:condensed;font-weight:bold;-webkit-text-stroke:0.3px;letter-spacing:0.094px;left:1926.09px;">20,00</span>
<span class="t" style="top:567px;font-size:16px;font-family:'DejaVu Sans Condensed', 'DejaVu Sans', 'Liberation Sans', sans-serif;font-stretch:condensed;font-weight:bold;-webkit-text-stroke:0.3px;letter-spacing:1.245px;left:1980.00px;">б/н</span>
<span class="t" style="top:567px;font-size:16px;font-family:'DejaVu Sans Condensed', 'DejaVu Sans', 'Liberation Sans', sans-serif;font-stretch:condensed;left:2117.00px;">01.08.2020</span>
<span class="t" style="top:596px;font-size:16px;font-family:'DejaVu Sans Condensed', 'DejaVu Sans', 'Liberation Sans', sans-serif;font-stretch:condensed;font-weight:bold;-webkit-text-stroke:0.3px;letter-spacing:0.151px;left:57.15px;">123320</span>
<span class="t" style="top:596px;font-size:16px;font-family:'DejaVu Sans Condensed', 'DejaVu Sans', 'Liberation Sans', sans-serif;font-stretch:condensed;font-weight:bold;-webkit-text-stroke:0.3px;letter-spacing:0.514px;left:126.00px;">Меридол з/п + ополаскиватель 100мл</span>
<span class="t" style="top:596px;font-size:16px;font-family:'DejaVu Sans Condensed', 'DejaVu Sans', 'Liberation Sans', sans-serif;font-stretch:condensed;font-weight:bold;-webkit-text-stroke:0.3px;letter-spacing:0.094px;left:1177.09px;">1,000</span>
<span class="t" style="top:596px;font-size:16px;font-family:'DejaVu Sans Condensed', 'DejaVu Sans', 'Liberation Sans', sans-serif;font-stretch:condensed;font-weight:bold;-webkit-text-stroke:0.3px;letter-spacing:0.064px;left:1425.00px;">Великобритани...</span>
<span class="t" style="top:596px;font-size:16px;font-family:'DejaVu Sans Condensed', 'DejaVu Sans', 'Liberation Sans', sans-serif;font-stretch:condensed;font-weight:bold;-webkit-text-stroke:0.3px;letter-spacing:0.151px;left:1583.00px;">Косметика</span>
<span class="t" style="top:596px;font-size:16px;font-family:'DejaVu Sans Condensed', 'DejaVu Sans', 'Liberation Sans', sans-serif;font-stretch:condensed;font-weight:bold;-webkit-text-stroke:0.3px;letter-spacing:0.672px;left:1778.00px;">ПДВ 20%</span>
<span class="t" style="top:596px;font-size:16px;font-family:'DejaVu Sans Condensed', 'DejaVu Sans', 'Liberation Sans', sans-serif;font-stretch:condensed;font-weight:bold;-webkit-text-stroke:0.3px;letter-spacing:0.094px;left:1926.09px;">20,00</span>
<span class="t" style="top:596px;font-size:16px;font-family:'DejaVu Sans Condensed', 'DejaVu Sans', 'Liberation Sans', sans-serif;font-stretch:condensed;font-weight:bold;-webkit-text-stroke:0.3px;letter-spacing:1.245px;left:1980.00px;">б/н</span>
<span class="t" style="top:596px;font-size:16px;font-family:'DejaVu Sans Condensed', 'DejaVu Sans', 'Liberation Sans', sans-serif;font-stretch:condensed;left:2117.00px;">01.06.2020</span>
<span class="t" style="top:624px;font-size:16px;font-family:'DejaVu Sans Condensed', 'DejaVu Sans', 'Liberation Sans', sans-serif;font-stretch:condensed;font-weight:bold;-webkit-text-stroke:0.3px;letter-spacing:0.151px;left:57.15px;">123318</span>
<span class="t" style="top:624px;font-size:16px;font-family:'DejaVu Sans Condensed', 'DejaVu Sans', 'Liberation Sans', sans-serif;font-stretch:condensed;font-weight:bold;-webkit-text-stroke:0.3px;letter-spacing:0.531px;left:126.00px;">Ополаскиватель д/полости рта Меридол 400мл</span>
<span class="t" style="top:624px;font-size:16px;font-family:'DejaVu Sans Condensed', 'DejaVu Sans', 'Liberation Sans', sans-serif;font-stretch:condensed;font-weight:bold;-webkit-text-stroke:0.3px;letter-spacing:0.094px;left:1177.09px;">1,000</span>
<span class="t" style="top:624px;font-size:16px;font-family:'DejaVu Sans Condensed', 'DejaVu Sans', 'Liberation Sans', sans-serif;font-stretch:condensed;font-weight:bold;-webkit-text-stroke:0.3px;letter-spacing:0.064px;left:1425.00px;">Великобритани...</span>
<span class="t" style="top:624px;font-size:16px;font-family:'DejaVu Sans Condensed', 'DejaVu Sans', 'Liberation Sans', sans-serif;font-stretch:condensed;font-weight:bold;-webkit-text-stroke:0.3px;letter-spacing:0.151px;left:1583.00px;">Косметика</span>
<span class="t" style="top:624px;font-size:16px;font-family:'DejaVu Sans Condensed', 'DejaVu Sans', 'Liberation Sans', sans-serif;font-stretch:condensed;font-weight:bold;-webkit-text-stroke:0.3px;letter-spacing:0.672px;left:1778.00px;">ПДВ 20%</span>
<span class="t" style="top:624px;font-size:16px;font-family:'DejaVu Sans Condensed', 'DejaVu Sans', 'Liberation Sans', sans-serif;font-stretch:condensed;font-weight:bold;-webkit-text-stroke:0.3px;letter-spacing:0.094px;left:1926.09px;">20,00</span>
<span class="t" style="top:624px;font-size:16px;font-family:'DejaVu Sans Condensed', 'DejaVu Sans', 'Liberation Sans', sans-serif;font-stretch:condensed;font-weight:bold;-webkit-text-stroke:0.3px;letter-spacing:1.245px;left:1980.00px;">б/н</span>
<span class="t" style="top:624px;font-size:16px;font-family:'DejaVu Sans Condensed', 'DejaVu Sans', 'Liberation Sans', sans-serif;font-stretch:condensed;left:2117.00px;">01.08.2020</span>
<div class="b" style="left:0px;top:916px;width:2159px;height:2px;background:#a6a6a6;"></div>
<div class="b" style="left:0px;top:918px;width:2159px;height:32px;background:#f0f0f0;"></div>
<div class="b" style="left:17px;top:918px;width:1px;height:32px;background:#c6c6c6;"></div>
<div class="b" style="left:125px;top:921px;width:635px;height:27px;background:#e6eaeb;border:1px solid #d8dcde;"></div>
<span class="t" style="top:927px;font-size:16px;font-family:'DejaVu Sans Condensed', 'DejaVu Sans', 'Liberation Sans', sans-serif;font-stretch:condensed;font-weight:bold;-webkit-text-stroke:0.3px;letter-spacing:0.087px;left:128.00px;">Запис 1 із 10</span>
<div class="b" style="left:0px;top:950px;width:2159px;height:1px;background:#b4b4b4;"></div>
<div class="b" style="left:0px;top:951px;width:2159px;height:1px;background:#fafafa;"></div>
<div class="b" style="left:25px;top:953px;width:542px;height:22px;background:#cdcdcd;"></div>
<svg style="left:7px;top:958px" width="10" height="12" viewBox="0 0 10 12"><path d="M8.500 1L2.500 6l6 5" fill="none" stroke="#505050" stroke-width="3"/></svg>
<svg style="left:2142px;top:958px" width="10" height="12" viewBox="0 0 10 12"><path d="M1.500 1l6 5-6 5" fill="none" stroke="#505050" stroke-width="3"/></svg>
<div class="b" style="left:6px;top:980px;width:19px;height:19px;background:#fff;border:1px solid #333;"></div>
<svg style="left:6px;top:980px" width="19" height="19" viewBox="0 0 19 19"><path d="M3.500 9.500l4 4.500 8-10" fill="none" stroke="#222" stroke-width="1.500"/></svg>
<span class="t" style="top:983px;font-size:16px;font-family:'DejaVu Sans Condensed', 'DejaVu Sans', 'Liberation Sans', sans-serif;font-stretch:condensed;letter-spacing:0.108px;left:29.00px;">Показувати деталі</span>
<div class="b" style="left:0px;top:1002px;width:2159px;height:13px;background:#fff;"></div>
<div class="b" style="left:2157px;top:1003px;width:2px;height:13px;background:#8f8f8f;"></div>
<div class="b" style="left:2px;top:1015px;width:2155px;height:1px;background:#a3a3a3;"></div>
<div class="b" style="left:2px;top:1016px;width:2155px;height:31px;background:#f0f0f0;"></div>
<div class="b" style="left:2px;top:1047px;width:2155px;height:254px;background:#fff;"></div>
<div class="b" style="left:2px;top:1015px;width:1px;height:286px;background:#a3a3a3;"></div>
<div class="b" style="left:2px;top:1300px;width:2155px;height:1px;background:#b9b9b9;"></div>
<div class="b" style="left:2157px;top:1016px;width:1px;height:285px;background:#cdcdcd;"></div>
<div class="b" style="left:2154px;top:1047px;width:1px;height:252px;background:#e6e6e6;"></div>
<div class="b" style="left:160px;top:1046px;width:1995px;height:1px;background:#dcdcdc;"></div>
<div class="b" style="left:3px;top:1016px;width:158px;height:32px;background:#fff;"></div>
<div class="b" style="left:160px;top:1016px;width:1px;height:31px;background:#dcdcdc;"></div>
<span class="t" style="top:1024px;font-size:16px;font-family:'DejaVu Sans Condensed', 'DejaVu Sans', 'Liberation Sans', sans-serif;font-stretch:condensed;letter-spacing:-0.062px;left:13.00px;">Прихід. Прив'язки</span>
<div class="b" style="left:161px;top:1020px;width:180px;height:27px;background:#f0f0f0;border:1px solid #d9d9d9;"></div>
<span class="t" style="top:1027px;font-size:16px;font-family:'DejaVu Sans Condensed', 'DejaVu Sans', 'Liberation Sans', sans-serif;font-stretch:condensed;letter-spacing:-0.295px;left:167.00px;">Звірка із замовленням</span>
<div class="b" style="left:341px;top:1020px;width:267px;height:27px;background:#f0f0f0;border:1px solid #d9d9d9;"></div>
<span class="t" style="top:1027px;font-size:16px;font-family:'DejaVu Sans Condensed', 'DejaVu Sans', 'Liberation Sans', sans-serif;font-stretch:condensed;letter-spacing:0.013px;left:350.00px;">Заметки (Прибуткова накладна)</span>
<div class="b" style="left:8px;top:1052px;width:2145px;height:243px;background:#fff;border:1px solid #828790;"></div>
<div class="b" style="left:9px;top:1082px;width:1067px;height:26px;background:#f0f0f0;"></div>
<div class="b" style="left:9px;top:1109px;width:17px;height:53px;background:#f0f0f0;"></div>
<div class="b" style="left:26px;top:1053px;width:1px;height:29px;background:#e4e4e4;"></div>
<div class="b" style="left:26px;top:1082px;width:1px;height:81px;background:#a0a0a0;"></div>
<div class="b" style="left:101px;top:1053px;width:1px;height:29px;background:#e4e4e4;"></div>
<div class="b" style="left:101px;top:1082px;width:1px;height:81px;background:#a0a0a0;"></div>
<div class="b" style="left:176px;top:1053px;width:1px;height:29px;background:#e4e4e4;"></div>
<div class="b" style="left:176px;top:1082px;width:1px;height:81px;background:#a0a0a0;"></div>
<div class="b" style="left:251px;top:1053px;width:1px;height:29px;background:#e4e4e4;"></div>
<div class="b" style="left:251px;top:1082px;width:1px;height:81px;background:#a0a0a0;"></div>
<div class="b" style="left:476px;top:1053px;width:1px;height:29px;background:#e4e4e4;"></div>
<div class="b" style="left:476px;top:1082px;width:1px;height:81px;background:#a0a0a0;"></div>
<div class="b" style="left:626px;top:1053px;width:1px;height:29px;background:#e4e4e4;"></div>
<div class="b" style="left:626px;top:1082px;width:1px;height:81px;background:#a0a0a0;"></div>
<div class="b" style="left:926px;top:1053px;width:1px;height:29px;background:#e4e4e4;"></div>
<div class="b" style="left:926px;top:1082px;width:1px;height:81px;background:#a0a0a0;"></div>
<div class="b" style="left:1076px;top:1082px;width:1px;height:81px;background:#a0a0a0;"></div>
<div class="b" style="left:9px;top:1108px;width:1068px;height:1px;background:#a0a0a0;"></div>
<div class="b" style="left:9px;top:1135px;width:1068px;height:1px;background:#a0a0a0;"></div>
<div class="b" style="left:9px;top:1162px;width:1068px;height:1px;background:#a0a0a0;"></div>
<svg style="left:12px;top:1059px" width="12" height="16" viewBox="0 0 12 16"><g fill="#1a1a1a"><rect x="4" y="0.8" width="7" height="1.700"/><rect x="4" y="3.9" width="7" height="1.700"/><rect x="4" y="7" width="7" height="1.700"/><rect x="4" y="10.1" width="7" height="1.700"/><rect x="4" y="13.2" width="7" height="1.700"/><rect x="1" y="0.8" width="1.700" height="1.700"/><rect x="1" y="7" width="1.700" height="1.700"/><rect x="1" y="13.2" width="1.700" height="1.700"/></g></svg>
<svg style="left:15px;top:1088px" width="8" height="14" viewBox="0 0 8 14"><path d="M0 0l7.500 6.500L0 13z" fill="#000"/></svg>
<span class="t" style="top:1062px;font-size:16px;font-family:'DejaVu Sans Condensed', 'DejaVu Sans', 'Liberation Sans', sans-serif;font-stretch:condensed;letter-spacing:0.224px;left:32.00px;">ВД пр…</span>
<span class="t" style="top:1062px;font-size:16px;font-family:'DejaVu Sans Condensed', 'DejaVu Sans', 'Liberation Sans', sans-serif;font-stretch:condensed;letter-spacing:0.281px;left:107.00px;">ВД по…</span>
<span class="t" style="top:1062px;font-size:16px;font-family:'DejaVu Sans Condensed', 'DejaVu Sans', 'Liberation Sans', sans-serif;font-stretch:condensed;letter-spacing:0.453px;left:182.00px;">ВД то…</span>
<span class="t" style="top:1062px;font-size:16px;font-family:'DejaVu Sans Condensed', 'DejaVu Sans', 'Liberation Sans', sans-serif;font-stretch:condensed;letter-spacing:-0.008px;left:279.00px;">Найменування товару</span>
<span class="t" style="top:1062px;font-size:16px;font-family:'DejaVu Sans Condensed', 'DejaVu Sans', 'Liberation Sans', sans-serif;font-stretch:condensed;letter-spacing:-0.064px;left:514.00px;">Виробник</span>
<span class="t" style="top:1062px;font-size:16px;font-family:'DejaVu Sans Condensed', 'DejaVu Sans', 'Liberation Sans', sans-serif;font-stretch:condensed;letter-spacing:0.230px;left:720.00px;">Постачальник</span>
<span class="t" style="top:1062px;font-size:16px;font-family:'DejaVu Sans Condensed', 'DejaVu Sans', 'Liberation Sans', sans-serif;font-stretch:condensed;letter-spacing:-0.355px;left:985.00px;">Ціна</span>
<span class="t" style="top:1088px;font-size:16px;font-family:'DejaVu Sans Condensed', 'DejaVu Sans', 'Liberation Sans', sans-serif;font-stretch:condensed;font-weight:bold;-webkit-text-stroke:0.3px;letter-spacing:-0.145px;left:35.50px;">21232..</span>
<span class="t" style="top:1088px;font-size:16px;font-family:'DejaVu Sans Condensed', 'DejaVu Sans', 'Liberation Sans', sans-serif;font-stretch:condensed;font-weight:bold;-webkit-text-stroke:0.3px;letter-spacing:-0.016px;left:130.98px;">7692</span>
<span class="t" style="top:1088px;font-size:16px;font-family:'DejaVu Sans Condensed', 'DejaVu Sans', 'Liberation Sans', sans-serif;font-stretch:condensed;font-weight:bold;-webkit-text-stroke:0.3px;letter-spacing:-0.186px;left:180.00px;">87147...</span>
<span class="t" style="top:1088px;font-size:16px;font-family:'DejaVu Sans Condensed', 'DejaVu Sans', 'Liberation Sans', sans-serif;font-stretch:condensed;font-weight:bold;-webkit-text-stroke:0.3px;letter-spacing:0.351px;left:255.00px;">Colgate зубна паста 50...</span>
<span class="t" style="top:1088px;font-size:16px;font-family:'DejaVu Sans Condensed', 'DejaVu Sans', 'Liberation Sans', sans-serif;font-stretch:condensed;font-weight:bold;-webkit-text-stroke:0.3px;letter-spacing:0.154px;left:480.00px;">Колгейт</span>
<span class="t" style="top:1088px;font-size:16px;font-family:'DejaVu Sans Condensed', 'DejaVu Sans', 'Liberation Sans', sans-serif;font-stretch:condensed;font-weight:bold;-webkit-text-stroke:0.3px;letter-spacing:0.124px;left:630.00px;">Доминик 777 ООО</span>
<span class="t" style="top:1088px;font-size:16px;font-family:'DejaVu Sans Condensed', 'DejaVu Sans', 'Liberation Sans', sans-serif;font-stretch:condensed;font-weight:bold;-webkit-text-stroke:0.3px;letter-spacing:0.094px;left:1026.09px;">65,22</span>
<span class="t" style="top:1115px;font-size:16px;font-family:'DejaVu Sans Condensed', 'DejaVu Sans', 'Liberation Sans', sans-serif;font-stretch:condensed;font-weight:bold;-webkit-text-stroke:0.3px;letter-spacing:-0.145px;left:35.50px;">21232..</span>
<span class="t" style="top:1115px;font-size:16px;font-family:'DejaVu Sans Condensed', 'DejaVu Sans', 'Liberation Sans', sans-serif;font-stretch:condensed;font-weight:bold;-webkit-text-stroke:0.3px;letter-spacing:-0.016px;left:130.98px;">7692</span>
<span class="t" style="top:1115px;font-size:16px;font-family:'DejaVu Sans Condensed', 'DejaVu Sans', 'Liberation Sans', sans-serif;font-stretch:condensed;font-weight:bold;-webkit-text-stroke:0.3px;letter-spacing:-0.186px;left:180.00px;">76101...</span>
<span class="t" style="top:1115px;font-size:16px;font-family:'DejaVu Sans Condensed', 'DejaVu Sans', 'Liberation Sans', sans-serif;font-stretch:condensed;font-weight:bold;-webkit-text-stroke:0.3px;letter-spacing:0.351px;left:255.00px;">Colgate зубна паста 50...</span>
<span class="t" style="top:1115px;font-size:16px;font-family:'DejaVu Sans Condensed', 'DejaVu Sans', 'Liberation Sans', sans-serif;font-stretch:condensed;font-weight:bold;-webkit-text-stroke:0.3px;letter-spacing:0.154px;left:480.00px;">Колгейт</span>
<span class="t" style="top:1115px;font-size:16px;font-family:'DejaVu Sans Condensed', 'DejaVu Sans', 'Liberation Sans', sans-serif;font-stretch:condensed;font-weight:bold;-webkit-text-stroke:0.3px;letter-spacing:0.124px;left:630.00px;">Доминик 777 ООО</span>
<span class="t" style="top:1115px;font-size:16px;font-family:'DejaVu Sans Condensed', 'DejaVu Sans', 'Liberation Sans', sans-serif;font-stretch:condensed;font-weight:bold;-webkit-text-stroke:0.3px;letter-spacing:0.094px;left:1026.09px;">65,22</span>
<span class="t" style="top:1142px;font-size:16px;font-family:'DejaVu Sans Condensed', 'DejaVu Sans', 'Liberation Sans', sans-serif;font-stretch:condensed;font-weight:bold;-webkit-text-stroke:0.3px;letter-spacing:-0.145px;left:35.50px;">20831..</span>
<span class="t" style="top:1142px;font-size:16px;font-family:'DejaVu Sans Condensed', 'DejaVu Sans', 'Liberation Sans', sans-serif;font-stretch:condensed;font-weight:bold;-webkit-text-stroke:0.3px;letter-spacing:-0.016px;left:130.98px;">7692</span>
<span class="t" style="top:1142px;font-size:16px;font-family:'DejaVu Sans Condensed', 'DejaVu Sans', 'Liberation Sans', sans-serif;font-stretch:condensed;font-weight:bold;-webkit-text-stroke:0.3px;letter-spacing:-0.393px;left:180.00px;">РА006...</span>
<span class="t" style="top:1142px;font-size:16px;font-family:'DejaVu Sans Condensed', 'DejaVu Sans', 'Liberation Sans', sans-serif;font-stretch:condensed;font-weight:bold;-webkit-text-stroke:0.3px;letter-spacing:0.351px;left:255.00px;">Colgate зубна паста 50...</span>
<span class="t" style="top:1142px;font-size:16px;font-family:'DejaVu Sans Condensed', 'DejaVu Sans', 'Liberation Sans', sans-serif;font-stretch:condensed;font-weight:bold;-webkit-text-stroke:0.3px;letter-spacing:0.154px;left:480.00px;">Колгейт</span>
<span class="t" style="top:1142px;font-size:16px;font-family:'DejaVu Sans Condensed', 'DejaVu Sans', 'Liberation Sans', sans-serif;font-stretch:condensed;font-weight:bold;-webkit-text-stroke:0.3px;letter-spacing:0.124px;left:630.00px;">Доминик 777 ООО</span>
<div class="b" style="left:5px;top:1305px;width:187px;height:35px;background:#f0f0f0;border:1px solid #1c1c1c;"></div>
<div class="b" style="left:195px;top:1305px;width:188px;height:35px;background:#f0f0f0;border:1px solid #1c1c1c;"></div>
<div class="b" style="left:385px;top:1305px;width:188px;height:35px;background:#f0f0f0;border:1px solid #1c1c1c;"></div>
<span class="t" style="top:1315px;font-size:16px;font-family:'DejaVu Sans Condensed', 'DejaVu Sans', 'Liberation Sans', sans-serif;font-stretch:condensed;letter-spacing:-0.045px;left:9.00px;">Головна</span>
<span class="t" style="top:1315px;font-size:16px;font-family:'DejaVu Sans Condensed', 'DejaVu Sans', 'Liberation Sans', sans-serif;font-stretch:condensed;letter-spacing:0.129px;left:199.00px;">Список: Прибуткові  …</span>
<span class="t" style="top:1315px;font-size:16px;font-family:'DejaVu Sans Condensed', 'DejaVu Sans', 'Liberation Sans', sans-serif;font-stretch:condensed;letter-spacing:0.107px;left:389.00px;">Прибуткова накладна .</span>
<div class="b" style="left:0px;top:1343px;width:2159px;height:1px;background:#d9d9d9;"></div>
<div class="b" style="left:297px;top:1346px;width:1px;height:26px;background:#d4d4d4;"></div>
<div class="b" style="left:603px;top:1346px;width:1px;height:26px;background:#d4d4d4;"></div>
<div class="b" style="left:661px;top:1346px;width:1px;height:26px;background:#d4d4d4;"></div>
<div class="b" style="left:1117px;top:1346px;width:1px;height:26px;background:#d4d4d4;"></div>
<svg style="left:4px;top:1349px" width="20" height="22" viewBox="0 0 20 22"><path d="M2 5.500L6 1.500h12v15.500l-4 4H2z" fill="#2f6fc2" stroke="#2a5a9c" stroke-width=".8"/><path d="M2 5.500L6 1.500h12l-4 4z" fill="#c9d3e2"/><path d="M2 5.500h12v15.500H2z" fill="#3f86db"/><path d="M2.500 8.500h11M2.500 11.500h11M2.500 14.500h11M2.500 17.500h11" stroke="#a9d0f7" stroke-width="1.300"/><path d="M14 5.500l4-4v15.500l-4 4z" fill="#2459a6"/></svg>
<svg style="left:302px;top:1348px" width="19" height="23" viewBox="0 0 19 23"><path d="M2 22c0-6 3-8 7.500-8s7.500 2 7.500 8z" fill="#8f86d6" stroke="#6a60b8" stroke-width="1"/><circle cx="9.500" cy="9" r="5" fill="#f6d6c0" stroke="#c9a087" stroke-width="1"/><path d="M4 7c1-5 9-6 11 0-3-2-8-2-11 0z" fill="#e5533d"/><circle cx="15.500" cy="3" r="1.800" fill="#f3f3f3" stroke="#ccc" stroke-width=".5"/></svg>
<svg style="left:606px;top:1349px" width="23" height="21" viewBox="0 0 23 21"><path d="M2 8l8-6 11 4v9l-9 5-10-5z" fill="#8e96c8" stroke="#5f679c" stroke-width="1"/><path d="M2 8l10 4 9-6" fill="none" stroke="#c9cdea" stroke-width="1.200"/><path d="M5 15v5M9 17v4M16 16v4" stroke="#c9a020" stroke-width="2"/></svg>
<span class="t" style="top:1352px;font-size:16px;font-family:'Liberation Sans', sans-serif;letter-spacing:0.279px;left:30.00px;">База даних: TASA3@TITAN</span>
<span class="t" style="top:1352px;font-size:16px;font-family:'Liberation Sans', sans-serif;letter-spacing:-0.006px;left:329.00px;">Користувач: GIFT</span>
<span class="t" style="top:1352px;font-size:16px;font-family:'Liberation Sans', sans-serif;letter-spacing:0.094px;left:636.00px;">3</span>
<span class="t" style="top:1352px;font-size:16px;font-family:'Liberation Sans', sans-serif;letter-spacing:0.242px;left:667.00px;">Кассовый аппарат не подключен</span>
<span class="t" style="top:1352px;font-size:16px;font-family:'Liberation Sans', sans-serif;letter-spacing:0.084px;left:1123.00px;">Зона: Склад [1]</span>
<svg style="left:0;top:0" width="2159" height="1372" viewBox="0 0 2159 1372"><polygon points="82.8,382.2 660.0,583.7 662.6,576.2 83.2,381.2" fill="#f40000"/><path d="M654.800 570.800L663 581.300L650.200 584.800" fill="none" stroke="#f40000" stroke-width="6" stroke-linecap="round" stroke-linejoin="miter"/></svg>
<div class="b" style="left:668px;top:386px;width:399px;height:664px;background:#f2f2f2;border:1px solid #a0a0a0;"></div>
<span class="t" style="top:397px;font-size:18px;font-family:'Liberation Sans', sans-serif;letter-spacing:-0.406px;left:719.00px;">Додати</span>
<span class="t" style="top:397px;font-size:18px;font-family:'Liberation Sans', sans-serif;letter-spacing:-0.339px;left:1007.66px;">Ins</span>
<span class="t" style="top:430px;font-size:18px;font-family:'Liberation Sans', sans-serif;letter-spacing:-0.555px;left:719.00px;">Видалити</span>
<svg style="left:1045px;top:431px" width="8" height="12" viewBox="0 0 8 12"><path d="M0.500 0.500l6.500 5.500-6.500 5.500z" fill="#000"/></svg>
<span class="t" style="top:463px;font-size:18px;font-family:'Liberation Sans', sans-serif;letter-spacing:-0.519px;left:719.00px;">Редагувати</span>
<svg style="left:1045px;top:464px" width="8" height="12" viewBox="0 0 8 12"><path d="M0.500 0.500l6.500 5.500-6.500 5.500z" fill="#000"/></svg>
<span class="t" style="top:496px;font-size:18px;font-family:'Liberation Sans', sans-serif;letter-spacing:-0.029px;left:719.00px;">Копіювати рядок документа</span>
<span class="t" style="top:496px;font-size:18px;font-family:'Liberation Sans', sans-serif;letter-spacing:-0.253px;left:981.75px;">Ctrl+S</span>
<div class="b" style="left:716px;top:525px;width:346px;height:1px;background:#d5d5d5;"></div>
<span class="t" style="top:538px;font-size:18px;font-family:'Liberation Sans', sans-serif;letter-spacing:0.281px;left:719.00px;">Друк</span>
<span class="t" style="top:538px;font-size:18px;font-family:'Liberation Sans', sans-serif;letter-spacing:-1.508px;left:1011.49px;">F2</span>
<div class="b" style="left:673px;top:563px;width:389px;height:33px;background:#91c9f7;"></div>
<span class="t" style="top:571px;font-size:18px;font-family:'Liberation Sans', sans-serif;letter-spacing:0.059px;left:719.00px;">Друк стікерів та цінників</span>
<span class="t" style="top:571px;font-size:18px;font-family:'Liberation Sans', sans-serif;letter-spacing:-0.217px;left:972.78px;">Ctrl+F2</span>
<span class="t" style="top:604px;font-size:18px;font-family:'Liberation Sans', sans-serif;letter-spacing:0.069px;left:719.00px;">Обмін даними</span>
<svg style="left:1045px;top:605px" width="8" height="12" viewBox="0 0 8 12"><path d="M0.500 0.500l6.500 5.500-6.500 5.500z" fill="#000"/></svg>
<div class="b" style="left:716px;top:633px;width:346px;height:1px;background:#d5d5d5;"></div>
<span class="t" style="top:646px;font-size:18px;font-family:'Liberation Sans', sans-serif;color:#a3a3a3;letter-spacing:0.006px;left:719.00px;">Зробити документ активним</span>
<span class="t" style="top:646px;font-size:18px;font-family:'Liberation Sans', sans-serif;color:#a3a3a3;letter-spacing:0.081px;left:980.08px;">Ctrl+A</span>
<span class="t" style="top:679px;font-size:18px;font-family:'Liberation Sans', sans-serif;letter-spacing:0.029px;left:719.00px;">Зробити документ пасивним</span>
<div class="b" style="left:716px;top:708px;width:346px;height:1px;background:#d5d5d5;"></div>
<span class="t" style="top:721px;font-size:18px;font-family:'Liberation Sans', sans-serif;letter-spacing:0.052px;left:719.00px;">Ціноутворення</span>
<svg style="left:1045px;top:722px" width="8" height="12" viewBox="0 0 8 12"><path d="M0.500 0.500l6.500 5.500-6.500 5.500z" fill="#000"/></svg>
<div class="b" style="left:716px;top:750px;width:346px;height:1px;background:#d5d5d5;"></div>
<span class="t" style="top:763px;font-size:18px;font-family:'Liberation Sans', sans-serif;letter-spacing:-0.432px;left:719.00px;">Сервіс</span>
<svg style="left:1045px;top:764px" width="8" height="12" viewBox="0 0 8 12"><path d="M0.500 0.500l6.500 5.500-6.500 5.500z" fill="#000"/></svg>
<span class="t" style="top:796px;font-size:18px;font-family:'Liberation Sans', sans-serif;letter-spacing:-0.750px;left:719.00px;">Стан</span>
<svg style="left:1045px;top:797px" width="8" height="12" viewBox="0 0 8 12"><path d="M0.500 0.500l6.500 5.500-6.500 5.500z" fill="#000"/></svg>
<span class="t" style="top:829px;font-size:18px;font-family:'Liberation Sans', sans-serif;letter-spacing:-0.122px;left:719.00px;">Інформація</span>
<svg style="left:1045px;top:830px" width="8" height="12" viewBox="0 0 8 12"><path d="M0.500 0.500l6.500 5.500-6.500 5.500z" fill="#000"/></svg>
<span class="t" style="top:862px;font-size:18px;font-family:'Liberation Sans', sans-serif;letter-spacing:-0.116px;left:719.00px;">Історія</span>
<span class="t" style="top:862px;font-size:18px;font-family:'Liberation Sans', sans-serif;letter-spacing:0.247px;left:986.25px;">Ctrl+I</span>
<div class="b" style="left:716px;top:891px;width:346px;height:1px;background:#d5d5d5;"></div>
<span class="t" style="top:904px;font-size:18px;font-family:'Liberation Sans', sans-serif;letter-spacing:-0.125px;left:719.00px;">Оновити</span>
<span class="t" style="top:904px;font-size:18px;font-family:'Liberation Sans', sans-serif;letter-spacing:-1.344px;left:1002.66px;">F12</span>
<div class="b" style="left:716px;top:933px;width:346px;height:1px;background:#d5d5d5;"></div>
<span class="t" style="top:946px;font-size:18px;font-family:'Liberation Sans', sans-serif;letter-spacing:-0.038px;left:719.00px;">Інструменти</span>
<svg style="left:1045px;top:947px" width="8" height="12" viewBox="0 0 8 12"><path d="M0.500 0.500l6.500 5.500-6.500 5.500z" fill="#000"/></svg>
<span class="t" style="top:979px;font-size:18px;font-family:'Liberation Sans', sans-serif;letter-spacing:0.102px;left:719.00px;">Контроль</span>
<svg style="left:1045px;top:980px" width="8" height="12" viewBox="0 0 8 12"><path d="M0.500 0.500l6.500 5.500-6.500 5.500z" fill="#000"/></svg>
<div class="b" style="left:716px;top:1008px;width:346px;height:1px;background:#d5d5d5;"></div>
<span class="t" style="top:1021px;font-size:18px;font-family:'Liberation Sans', sans-serif;letter-spacing:0.031px;left:719.00px;">Налаштувати відображення колонок</span>
<svg style="left:679px;top:396px" width="21" height="21" viewBox="0 0 22 22"><path d="M8.500 1.500h5v7h7v5h-7v7h-5v-7h-7v-5h7z" fill="#8fdc8a" stroke="#62c25d" stroke-width="1.200" stroke-linejoin="round"/><path d="M9.500 13.500h3v6.500h-3zM2.500 11h17v2.200h-17z" fill="#74cf6f"/></svg>
<svg style="left:676px;top:534px" width="25" height="25" viewBox="0 0 25 25"><path d="M6 1h9l4 4v6H6z" fill="#f0f6fd" stroke="#a9c6ea" stroke-width="1"/><rect x="1" y="8" width="23" height="12" rx="3" fill="#d9d9d9" stroke="#a8a8a8" stroke-width="1"/><rect x="1.500" y="13" width="22" height="4" fill="#8f8f8f"/><rect x="1.500" y="16" width="22" height="3" fill="#c4c4c4"/><path d="M5 18h15v5H5z" fill="#f4f9ff" stroke="#8fb8ee" stroke-width="1"/></svg>
<svg style="left:678px;top:901px" width="22" height="22" viewBox="0 0 22 22"><circle cx="11" cy="11" r="7" fill="none" stroke="#a6d3f6" stroke-width="5"/><path d="M11 1.500A9.500 9.500 0 0 1 20.500 11" fill="none" stroke="#8ec9f7" stroke-width="0"/><path d="M11.500 4A7 7 0 0 1 18 11.500" fill="none" stroke="#c9e5fa" stroke-width="3"/><path d="M0.500 1h10.500L7.500 4.500 10 8.500 7 10.500 4.500 7 0.500 11z" fill="#7fc4f8"/><path d="M21.500 21H11l3.500-3.500L12 13.500l3-2 2.500 3.500 4-4z" fill="#45b1f6"/><circle cx="11" cy="11" r="3.200" fill="#f4f9fd"/></svg>
</body></html>
